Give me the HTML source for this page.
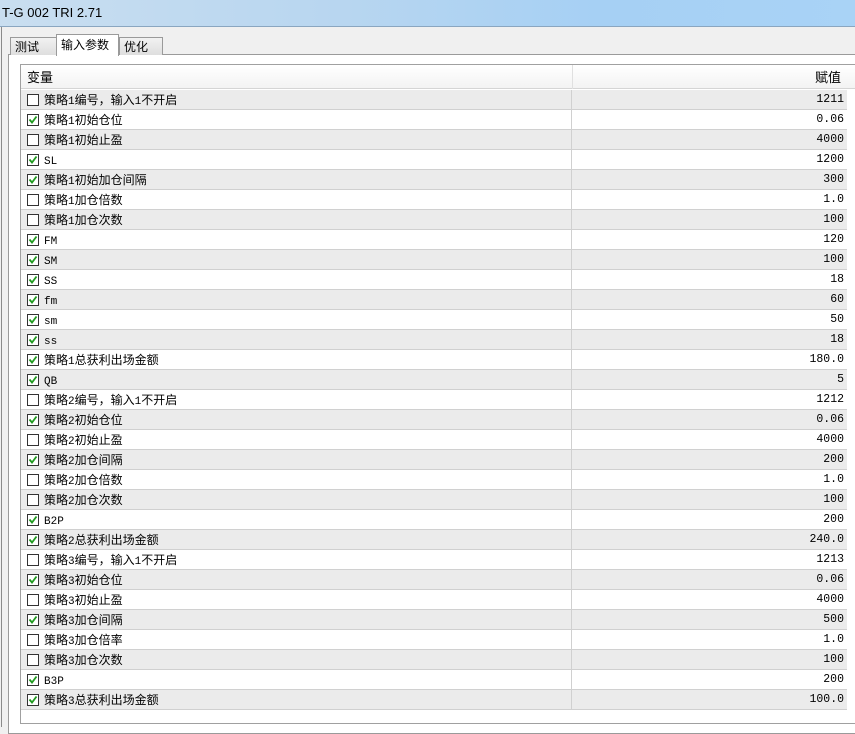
<!DOCTYPE html>
<html><head><meta charset="utf-8"><style>
*{margin:0;padding:0;box-sizing:border-box}
body{width:855px;height:721px;overflow:hidden;background:#f0f0f0;font-family:"Liberation Sans","Noto Sans CJK SC",sans-serif;font-size:12px;color:#000;position:relative}
.title{position:absolute;left:0;top:0;width:855px;height:27px;background:linear-gradient(90deg,#c9def0 0%,#b8d6f0 40%,#a6d0f4 70%,#a9d3f6 100%);border-bottom:1px solid #8aa6c0}
.title span{position:absolute;left:2px;top:5px;font-size:13px;color:#000}
.outer{position:absolute;left:1px;top:27px;width:860px;height:700px;border-left:1px solid #8a8a8a;background:#f0f0f0}
.tab{position:absolute;top:37px;height:18px;border:1px solid #9a9a9a;border-bottom:none;background:linear-gradient(#f2f2f2,#dedede);padding:0 4px;line-height:17px;font-size:12px;font-family:"Noto Sans CJK SC",sans-serif}
.tab.act{top:34px;height:22px;background:#fff;z-index:2;line-height:20px}
.panel{position:absolute;left:8px;top:54px;width:860px;height:680px;border:1px solid #9a9a9a;background:#fff}
.list{position:absolute;left:20px;top:64px;width:840px;height:660px;border:1px solid #a0a0a0;background:#fff}
.hdr{position:absolute;left:21px;top:65px;width:834px;height:24px;background:linear-gradient(#fff,#f3f3f3);border-bottom:1px solid #d5d5d5;font-family:"Noto Sans CJK SC",sans-serif;font-size:13px;line-height:24px}
.hdr .a{position:absolute;left:6px;top:0}
.hdr .b{position:absolute;right:14px;top:0}
.hdr .d{position:absolute;left:551px;top:0;width:1px;height:24px;background:#e0e0e0}
.row{position:absolute;left:21px;width:826px;height:20px;border-bottom:1px solid #d0d0d0;font-size:12px;line-height:19px}
.row.g{background:#ebebeb}
.row .cb{position:absolute;left:6px;top:4px;width:12px;height:12px;border:1px solid #333;background:#fff}
.row .cb svg{position:absolute;left:0;top:0}
.row .n{position:absolute;left:23px;top:0;white-space:nowrap;font-family:"Noto Sans CJK SC",sans-serif;line-height:19px}
.row .n i{font-style:normal;font-family:"Liberation Mono",monospace;font-size:11px}
.row .v{position:absolute;right:3px;top:0;font-family:"Liberation Mono",monospace;font-size:11.5px;line-height:20px}
.row .d{position:absolute;left:550px;top:0;width:1px;height:20px;background:#d0d0d0}
.row .e{position:absolute;right:-1px;top:0;width:1px;height:20px;background:#d0d0d0}
</style></head><body>
<div class="title"><span>T-G 002 TRI 2.71</span></div>
<div class="outer"></div>
<div class="panel"></div>
<div class="tab" style="left:10px;width:47px">测试</div>
<div class="tab act" style="left:56px;width:63px">输入参数</div>
<div class="tab" style="left:119px;width:44px">优化</div>
<div class="list"></div>
<div class="hdr"><span class="a">变量</span><span class="d"></span><span class="b">赋值</span></div>
<div id="rows"></div>
<script>
var d=[[0,"策略1编号，输入1不开启","1211"],[1,"策略1初始仓位","0.06"],[0,"策略1初始止盈","4000"],[1,"SL","1200"],[1,"策略1初始加仓间隔","300"],[0,"策略1加仓倍数","1.0"],[0,"策略1加仓次数","100"],[1,"FM","120"],[1,"SM","100"],[1,"SS","18"],[1,"fm","60"],[1,"sm","50"],[1,"ss","18"],[1,"策略1总获利出场金额","180.0"],[1,"QB","5"],[0,"策略2编号，输入1不开启","1212"],[1,"策略2初始仓位","0.06"],[0,"策略2初始止盈","4000"],[1,"策略2加仓间隔","200"],[0,"策略2加仓倍数","1.0"],[0,"策略2加仓次数","100"],[1,"B2P","200"],[1,"策略2总获利出场金额","240.0"],[0,"策略3编号，输入1不开启","1213"],[1,"策略3初始仓位","0.06"],[0,"策略3初始止盈","4000"],[1,"策略3加仓间隔","500"],[0,"策略3加仓倍率","1.0"],[0,"策略3加仓次数","100"],[1,"B3P","200"],[1,"策略3总获利出场金额","100.0"]];
var h="";
d.forEach(function(r,i){
 var nm=r[1].replace(/([A-Za-z0-9]+)/g,'<i>$1</i>');
 h+='<div class="row'+(i%2==0?' g':'')+'" style="top:'+(90+i*20)+'px"><span class="cb">'+(r[0]?'<svg width="10" height="10" viewBox="0 0 10 10"><path d="M1.5 4.5 L4 7.5 L8.5 1.5" stroke="#1f9a1f" stroke-width="1.8" fill="none"/></svg>':'')+'</span><span class="n">'+nm+'</span><span class="d"></span><span class="v">'+r[2]+'</span></div>';
});
document.getElementById("rows").innerHTML=h;
</script>
</body></html>
